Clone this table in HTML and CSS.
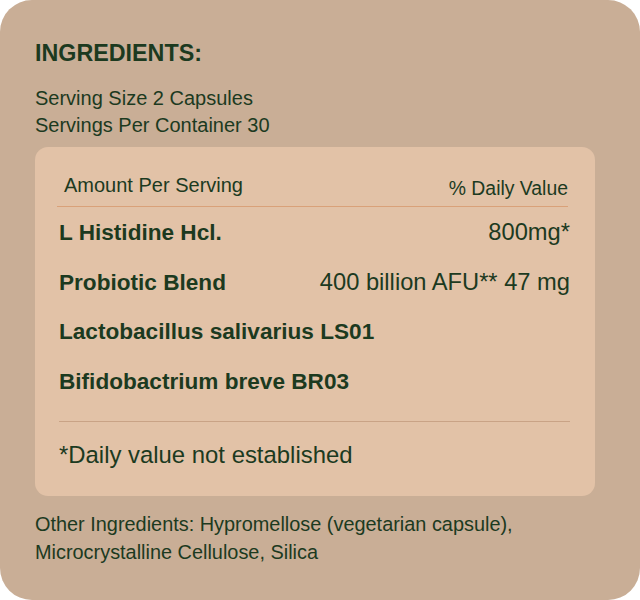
FILE: index.html
```html
<!DOCTYPE html>
<html lang="en">
<head>
<meta charset="utf-8">
<title>Ingredients</title>
<link rel="stylesheet" href="styles.css">
</head>
<body>
<section class="card">
  <h2 class="title">INGREDIENTS:</h2>
  <p class="serving">Serving Size 2 Capsules<br>Servings Per Container 30</p>
  <div class="panel">
    <div class="head">
      <span class="head-left">Amount Per Serving</span>
      <span class="head-right">% Daily Value</span>
    </div>
    <div class="row"><span class="name">L Histidine Hcl.</span><span class="value">800mg*</span></div>
    <div class="row"><span class="name">Probiotic Blend</span><span class="value">400 billion AFU** 47 mg</span></div>
    <div class="row"><span class="name">Lactobacillus salivarius LS01</span></div>
    <div class="row"><span class="name">Bifidobactrium breve BR03</span></div>
    <p class="note">*Daily value not established</p>
  </div>
  <p class="other">Other Ingredients: Hypromellose (vegetarian capsule),<br>Microcrystalline Cellulose, Silica</p>
</section>
</body>
</html>
```
FILE: styles.css
```css
html, body {
  margin: 0;
  padding: 0;
  background: #ffffff;
}
body {
  font-family: "Liberation Sans", Arial, sans-serif;
  color: #1c3a1f;
}
.card {
  box-sizing: border-box;
  width: 640px;
  height: 600px;
  border-radius: 32px;
  background: #c9ae96;
  padding: 39px 45px 0 35px;
}
.title {
  margin: 0;
  font-size: 23.3px;
  line-height: 28px;
  font-weight: 700;
}
.serving {
  margin: 18px 0 0;
  font-size: 20px;
  line-height: 27.3px;
}
.panel {
  margin: 7px 0 0;
  padding: 26px 25px 27px 24px;
  background: #e2c2a7;
  border-radius: 13px;
}
.head {
  display: flex;
  justify-content: space-between;
  align-items: flex-start;
  padding: 0 0 6px 7px;
  margin: 0 2px 0 -2px;
  border-bottom: 1px solid #d9a179;
  font-size: 20px;
  line-height: 24px;
}
.head-right {
  margin-top: 3px;
  font-size: 19.4px;
}
.row {
  display: flex;
  justify-content: space-between;
  align-items: baseline;
  height: 50px;
  line-height: 50.3px;
}
.name {
  font-size: 22.6px;
  font-weight: 700;
}
.value {
  font-size: 23.7px;
}
.note {
  margin: 14px 0 0;
  padding-top: 19px;
  border-top: 1px solid #c9a386;
  font-size: 23.9px;
  line-height: 28px;
}
.other {
  margin: 14px 0 0;
  font-size: 19.9px;
  line-height: 28px;
}
```
